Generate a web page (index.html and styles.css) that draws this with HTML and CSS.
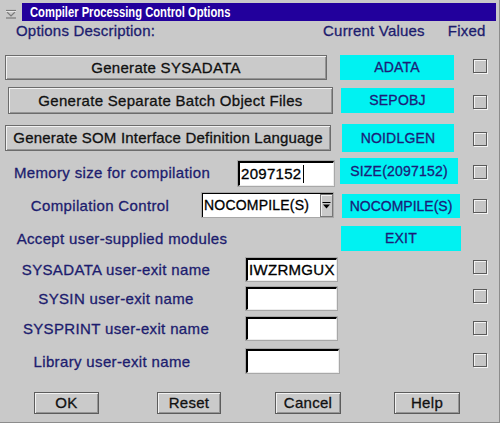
FILE: index.html
```html
<!DOCTYPE html>
<html>
<head>
<meta charset="utf-8">
<link rel="stylesheet" href="styles.css">
</head>
<body>
<div class="window">
  <div class="titlebar">
    <div class="sysmenu">
      <svg width="12" height="10" viewBox="0 0 12 10">
        <path d="M1 1.5H11" stroke="#7a7a7a" stroke-width="1.2"/>
        <path d="M2 3L6 7L10 3" fill="none" stroke="#7a7a7a" stroke-width="1.2"/>
        <path d="M1 9H11" stroke="#7a7a7a" stroke-width="1.2"/>
        <path d="M1 2.6H11" stroke="#f2f2f2" stroke-width="0.8"/>
      </svg>
    </div>
    <div class="title"><span class="title-text">Compiler Processing Control Options</span></div>
  </div>

  <div class="header">
    <span class="h-desc">Options Description:</span>
    <span class="h-cur">Current Values</span>
    <span class="h-fixed">Fixed</span>
  </div>

  <div class="row r1">
    <div class="left"><div class="btn b1">Generate SYSADATA</div></div>
    <div class="val v1">ADATA</div>
    <span class="chk c1"></span>
  </div>

  <div class="row r2">
    <div class="left"><div class="btn b2">Generate Separate Batch Object Files</div></div>
    <div class="val v2">SEPOBJ</div>
    <span class="chk c2"></span>
  </div>

  <div class="row r3">
    <div class="left"><div class="btn b3">Generate SOM Interface Definition Language</div></div>
    <div class="val v3">NOIDLGEN</div>
    <span class="chk c3"></span>
  </div>

  <div class="row r4">
    <div class="left">
      <span class="lbl l4">Memory size for compilation</span>
      <div class="field f4">2097152<span class="caret"></span></div>
    </div>
    <div class="val v4">SIZE(2097152)</div>
    <span class="chk c4"></span>
  </div>

  <div class="row r5">
    <div class="left">
      <span class="lbl l5">Compilation Control</span>
      <div class="select">
        <div class="sel-text">NOCOMPILE(S)</div>
        <div class="sel-btn">
          <svg width="9" height="8" viewBox="0 0 9 8">
            <path d="M0.5 0.5H8.5" stroke="#000" stroke-width="1"/>
            <path d="M1 2.5H8L4.5 6.5Z" fill="#000"/>
          </svg>
        </div>
      </div>
    </div>
    <div class="val v5">NOCOMPILE(S)</div>
    <span class="chk c5"></span>
  </div>

  <div class="row r6">
    <div class="left">
      <span class="lbl l6">Accept user-supplied modules</span>
    </div>
    <div class="val v6">EXIT</div>
  </div>

  <div class="row r7">
    <div class="left">
      <span class="lbl l7">SYSADATA user-exit name</span>
      <div class="field fx">IWZRMGUX</div>
    </div>
    <span class="chk c7"></span>
  </div>

  <div class="row r8">
    <div class="left">
      <span class="lbl l7">SYSIN user-exit name</span>
      <div class="field fx"></div>
    </div>
    <span class="chk c8"></span>
  </div>

  <div class="row r9">
    <div class="left">
      <span class="lbl l7">SYSPRINT user-exit name</span>
      <div class="field fx"></div>
    </div>
    <span class="chk c9"></span>
  </div>

  <div class="row r10">
    <div class="left">
      <span class="lbl l10">Library user-exit name</span>
      <div class="field fx f10"></div>
    </div>
    <span class="chk c10"></span>
  </div>

  <div class="buttons">
    <div class="pbtn ok">OK</div>
    <div class="pbtn reset">Reset</div>
    <div class="pbtn cancel">Cancel</div>
    <div class="pbtn help">Help</div>
  </div>
</div>
</body>
</html>
```

FILE: styles.css
```css
html, body {
  margin: 0;
  padding: 0;
  background: #c9c9c9;
}

.window {
  width: 499px;
  height: 422px;
  background: #c9c9c9;
  border-right: 1px solid #8c8c8c;
  border-bottom: 1px solid #8c8c8c;
  font-family: "Liberation Sans", Arial, sans-serif;
  font-size: 15px;
  color: #1c1c6e;
  -webkit-text-stroke: 0.3px currentColor;
  display: flex;
  flex-direction: column;
}

/* title bar */
.titlebar {
  display: flex;
  height: 18px;
  margin-top: 3px;
}
.sysmenu {
  width: 22px;
  display: flex;
  align-items: center;
  justify-content: center;
  padding-top: 3px;
  box-sizing: border-box;
}
.title {
  flex: 1;
  margin-right: 3px;
  background: #22009c;
  color: #ffffff;
  font-weight: bold;
  font-size: 14px;
  line-height: 18px;
  padding-left: 8px;
  overflow: hidden;
  -webkit-text-stroke: 0;
}
.title-text {
  display: inline-block;
  white-space: nowrap;
  transform: scaleX(0.8);
  transform-origin: left center;
}

/* header */
.header {
  display: flex;
  height: 34px;
  line-height: 20px;
  letter-spacing: 0.2px;
}
.h-desc { margin-left: 16px; }
.h-cur { margin-left: 168px; }
.h-fixed { margin-left: 23px; }

/* rows */
.row {
  display: flex;
  align-items: flex-start;
}
.r1 { height: 32px; }
.r2 { height: 37px; }
.r3 { height: 34px; }
.r4 { height: 35px; }
.r5 { height: 33px; }
.r6 { height: 32px; }
.r7 { height: 29px; }
.r8 { height: 30px; }
.r9 { height: 32px; }
.r10 { height: 43px; }

.left {
  width: 338px;
  flex: none;
  display: flex;
  align-items: center;
}

.lbl {
  text-align: center;
  letter-spacing: 0.35px;
  white-space: nowrap;
  flex: none;
}
.l4 { width: 224px; }
.l5 { width: 200px; }
.l6 { width: 244px; height: 25px; line-height: 25px; }
.l7 { width: 232px; }
.l10 { width: 224px; margin-right: 8px; }

/* big option buttons */
.btn {
  box-sizing: border-box;
  border: 1px solid #6c6c6c;
  box-shadow: inset 1px 1px 0 #f2f2f2, inset -1px -1px 0 #959595;
  background: #cacaca;
  color: #111;
  text-align: center;
  letter-spacing: 0.3px;
  white-space: nowrap;
}
.b1 { margin-left: 5px; width: 322px; height: 25px; line-height: 23px; }
.b2 { margin-left: 8px; width: 325px; height: 27px; line-height: 25px; }
.b3 { margin-left: 5px; margin-top: 1px; width: 326px; height: 26px; line-height: 24px; letter-spacing: 0.2px; }

/* current values */
.val {
  background: #00f2f2;
  color: #1c1c78;
  font-size: 14px;
  text-align: center;
  letter-spacing: 0.2px;
  flex: none;
}
.v1 { margin-left: 2px; width: 114px; height: 25px; line-height: 25px; }
.v2 { margin-left: 3px; margin-top: 1px; width: 113px; height: 25px; line-height: 25px; }
.v3 { margin-left: 4px; width: 112px; height: 28px; line-height: 28px; }
.v4 { margin-left: 2px; width: 118px; height: 26px; line-height: 26px; }
.v5 { margin-left: 4px; margin-top: 1px; width: 118px; height: 24px; line-height: 24px; letter-spacing: 0; }
.v6 { margin-left: 3px; width: 120px; height: 25px; line-height: 25px; }

/* checkboxes */
.chk {
  box-sizing: border-box;
  width: 14px;
  height: 14px;
  margin-left: auto;
  margin-right: 12px;
  border: 1px solid #5a5a5a;
  box-shadow: 1px 1px 0 #f4f4f4, inset 1px 1px 0 #f4f4f4;
  background: #c6c6c6;
  flex: none;
}
.c1 { margin-top: 4px; }
.c2 { margin-top: 8px; }
.c3 { margin-top: 8px; }
.c4 { margin-top: 7px; }
.c5 { margin-top: 6px; }
.c7 { margin-top: 2px; }
.c8 { margin-top: 2px; }
.c9 { margin-top: 4px; }
.c10 { margin-top: 4px; }

/* entry fields */
.field {
  box-sizing: border-box;
  background: #ffffff;
  border-top: 2px solid #000;
  border-left: 2px solid #000;
  border-right: 1px solid #ececec;
  border-bottom: 1px solid #ececec;
  box-shadow: 0 0 0 1px #a8a8a8;
  color: #000;
  padding-left: 1px;
  letter-spacing: 0.3px;
  flex: none;
}
.f4 {
  margin-left: 14px;
  margin-top: 3px;
  width: 96px;
  height: 25px;
  line-height: 22px;
  display: flex;
  align-items: center;
}
.caret {
  display: inline-block;
  width: 1px;
  height: 18px;
  background: #000;
  margin-left: 1px;
}
.fx {
  margin-left: 14px;
  width: 91px;
  height: 23px;
  line-height: 20px;
}
.f10 { width: 93px; height: 24px; }

/* select */
.select {
  margin-left: 2px;
  width: 131px;
  height: 24px;
  display: flex;
  box-sizing: border-box;
  border-top: 1px solid #000;
  border-left: 1px solid #000;
  box-shadow: 0 0 0 1px #a8a8a8;
  flex: none;
}
.sel-text {
  flex: 1;
  background: #fff;
  color: #000;
  font-size: 14px;
  line-height: 22px;
  padding-left: 1px;
  letter-spacing: 0.2px;
}
.sel-btn {
  width: 13px;
  box-sizing: border-box;
  background: #cacaca;
  border: 1px solid #777;
  box-shadow: inset 1px 1px 0 #f2f2f2;
  display: flex;
  align-items: center;
  justify-content: center;
}

/* push buttons */
.buttons {
  display: flex;
  height: 22px;
}
.pbtn {
  box-sizing: border-box;
  height: 22px;
  line-height: 20px;
  border: 1px solid #5c5c5c;
  box-shadow: inset 1px 1px 0 #f2f2f2, inset -1px -1px 0 #959595;
  background: #cacaca;
  color: #111;
  text-align: center;
  letter-spacing: 0.3px;
}
.ok { margin-left: 34px; width: 65px; }
.reset { margin-left: 58px; width: 64px; }
.cancel { margin-left: 54px; width: 66px; }
.help { margin-left: 53px; width: 66px; }
```
